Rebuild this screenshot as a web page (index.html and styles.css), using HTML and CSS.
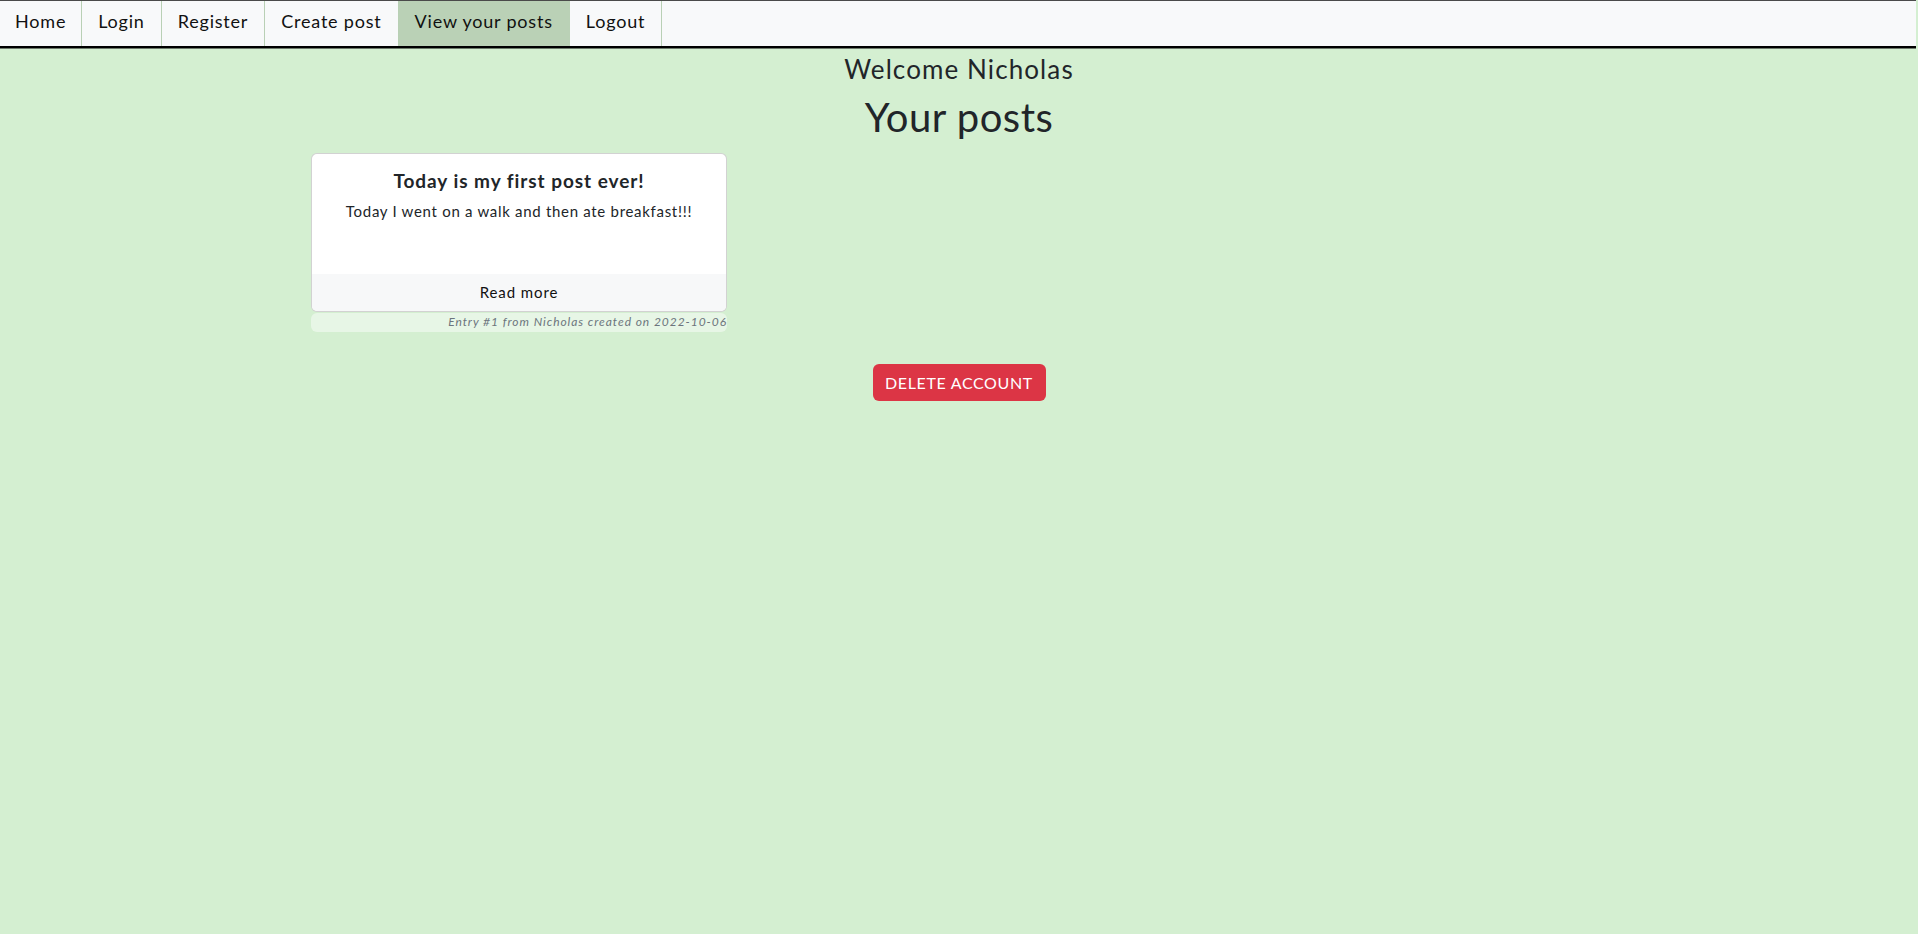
FILE: index.html
```html
<!DOCTYPE html>
<html lang="en">
<head>
<meta charset="utf-8">
<title>Your posts</title>
<link rel="stylesheet" href="styles.css">
</head>
<body>
<nav class="topnav">
  <a class="nav-link" href="#">Home</a>
  <a class="nav-link" href="#">Login</a>
  <a class="nav-link" href="#">Register</a>
  <a class="nav-link" href="#">Create post</a>
  <a class="nav-link active" href="#">View your posts</a>
  <a class="nav-link" href="#">Logout</a>
</nav>
<main class="page">
  <h3 class="welcome">Welcome Nicholas</h3>
  <h1 class="title">Your posts</h1>
  <div class="container">
    <div class="row">
      <div class="col">
        <div class="card">
          <div class="card-body">
            <h5 class="card-title">Today is my first post ever!</h5>
            <p class="card-text">Today I went on a walk and then ate breakfast!!!</p>
          </div>
          <div class="card-footer">Read more</div>
        </div>
        <div class="meta">Entry #1 from Nicholas created on 2022-10-06</div>
      </div>
    </div>
  </div>
  <div class="actions">
    <button class="btn-danger" type="button">DELETE ACCOUNT</button>
  </div>
</main>
</body>
</html>
```

FILE: styles.css
```css
* { box-sizing: border-box; }
html, body { margin: 0; padding: 0; }
body {
  background: #d4efd1;
  font-family: Lato, "Noto Sans", sans-serif;
  color: #212529;
  min-height: 934px;
}
.topnav {
  display: flex;
  background: #f8f9fa;
  border-top: 1px solid #4a4a4a;
  border-bottom: 2px solid #000;
  box-shadow: 0 1px 0 #6d7a6b;
  height: 48px;
  margin-right: 2px;
}
.nav-link {
  display: flex;
  align-items: center;
  padding: 0 16px 6px 16px;
  color: #111;
  text-decoration: none;
  font-size: 18px;
  letter-spacing: 0.8px;
  border-right: 1px solid #b9d0b5;
}
.nav-link:first-child { padding: 0 15px 6px 15px; }
.nav-link.active { background: #bad1b6; border-right-color: #bad1b6; }
.page { text-align: center; }
.welcome {
  margin: 3px 0 0;
  font-size: 26px;
  font-weight: 400;
  line-height: 36px;
  letter-spacing: 1.1px;
}
.title {
  margin: 6px 0 0;
  font-size: 40px;
  font-weight: 400;
  line-height: 48px;
  letter-spacing: 0.5px;
}
.container {
  max-width: 1320px;
  margin: 12px auto 0;
  padding: 0 12px;
  text-align: left;
}
.row { display: flex; margin: 0 -12px; }
.col { width: 33.3333%; padding: 0 12px; }
.card {
  background: #fff;
  border: 1px solid rgba(0,0,0,0.175);
  border-radius: 6px;
  overflow: hidden;
}
.card-body {
  padding: 15px 16px 0;
  height: 120px;
  text-align: center;
}
.card-title {
  margin: 0 0 8px;
  font-size: 19px;
  font-weight: 700;
  line-height: 23px;
  letter-spacing: 0.95px;
}
.card-text {
  margin: 0;
  font-size: 15px;
  line-height: 23px;
  letter-spacing: 0.7px;
}
.card-footer {
  background: #f7f8f9;
  border-top: 0;
  padding: 7px 16px 8px;
  font-size: 15px;
  line-height: 22px;
  text-align: center;
  color: #111;
  letter-spacing: 0.9px;
}
.meta {
  margin-top: 1px;
  background: rgba(255,255,255,0.45);
  border-radius: 6px;
  padding: 0 0 2px;
  text-align: right;
  font-size: 12px;
  line-height: 17px;
  font-style: italic;
  color: #6c757d;
  letter-spacing: 0.95px;
}
.actions { margin-top: 32px; }
.btn-danger {
  background: #dc3545;
  color: #fff;
  border: 0;
  border-radius: 6px;
  width: 173px;
  height: 37px;
  font-family: Lato, "Noto Sans", sans-serif;
  font-size: 16px;
  letter-spacing: 0.65px;
  padding: 0;
}
```
